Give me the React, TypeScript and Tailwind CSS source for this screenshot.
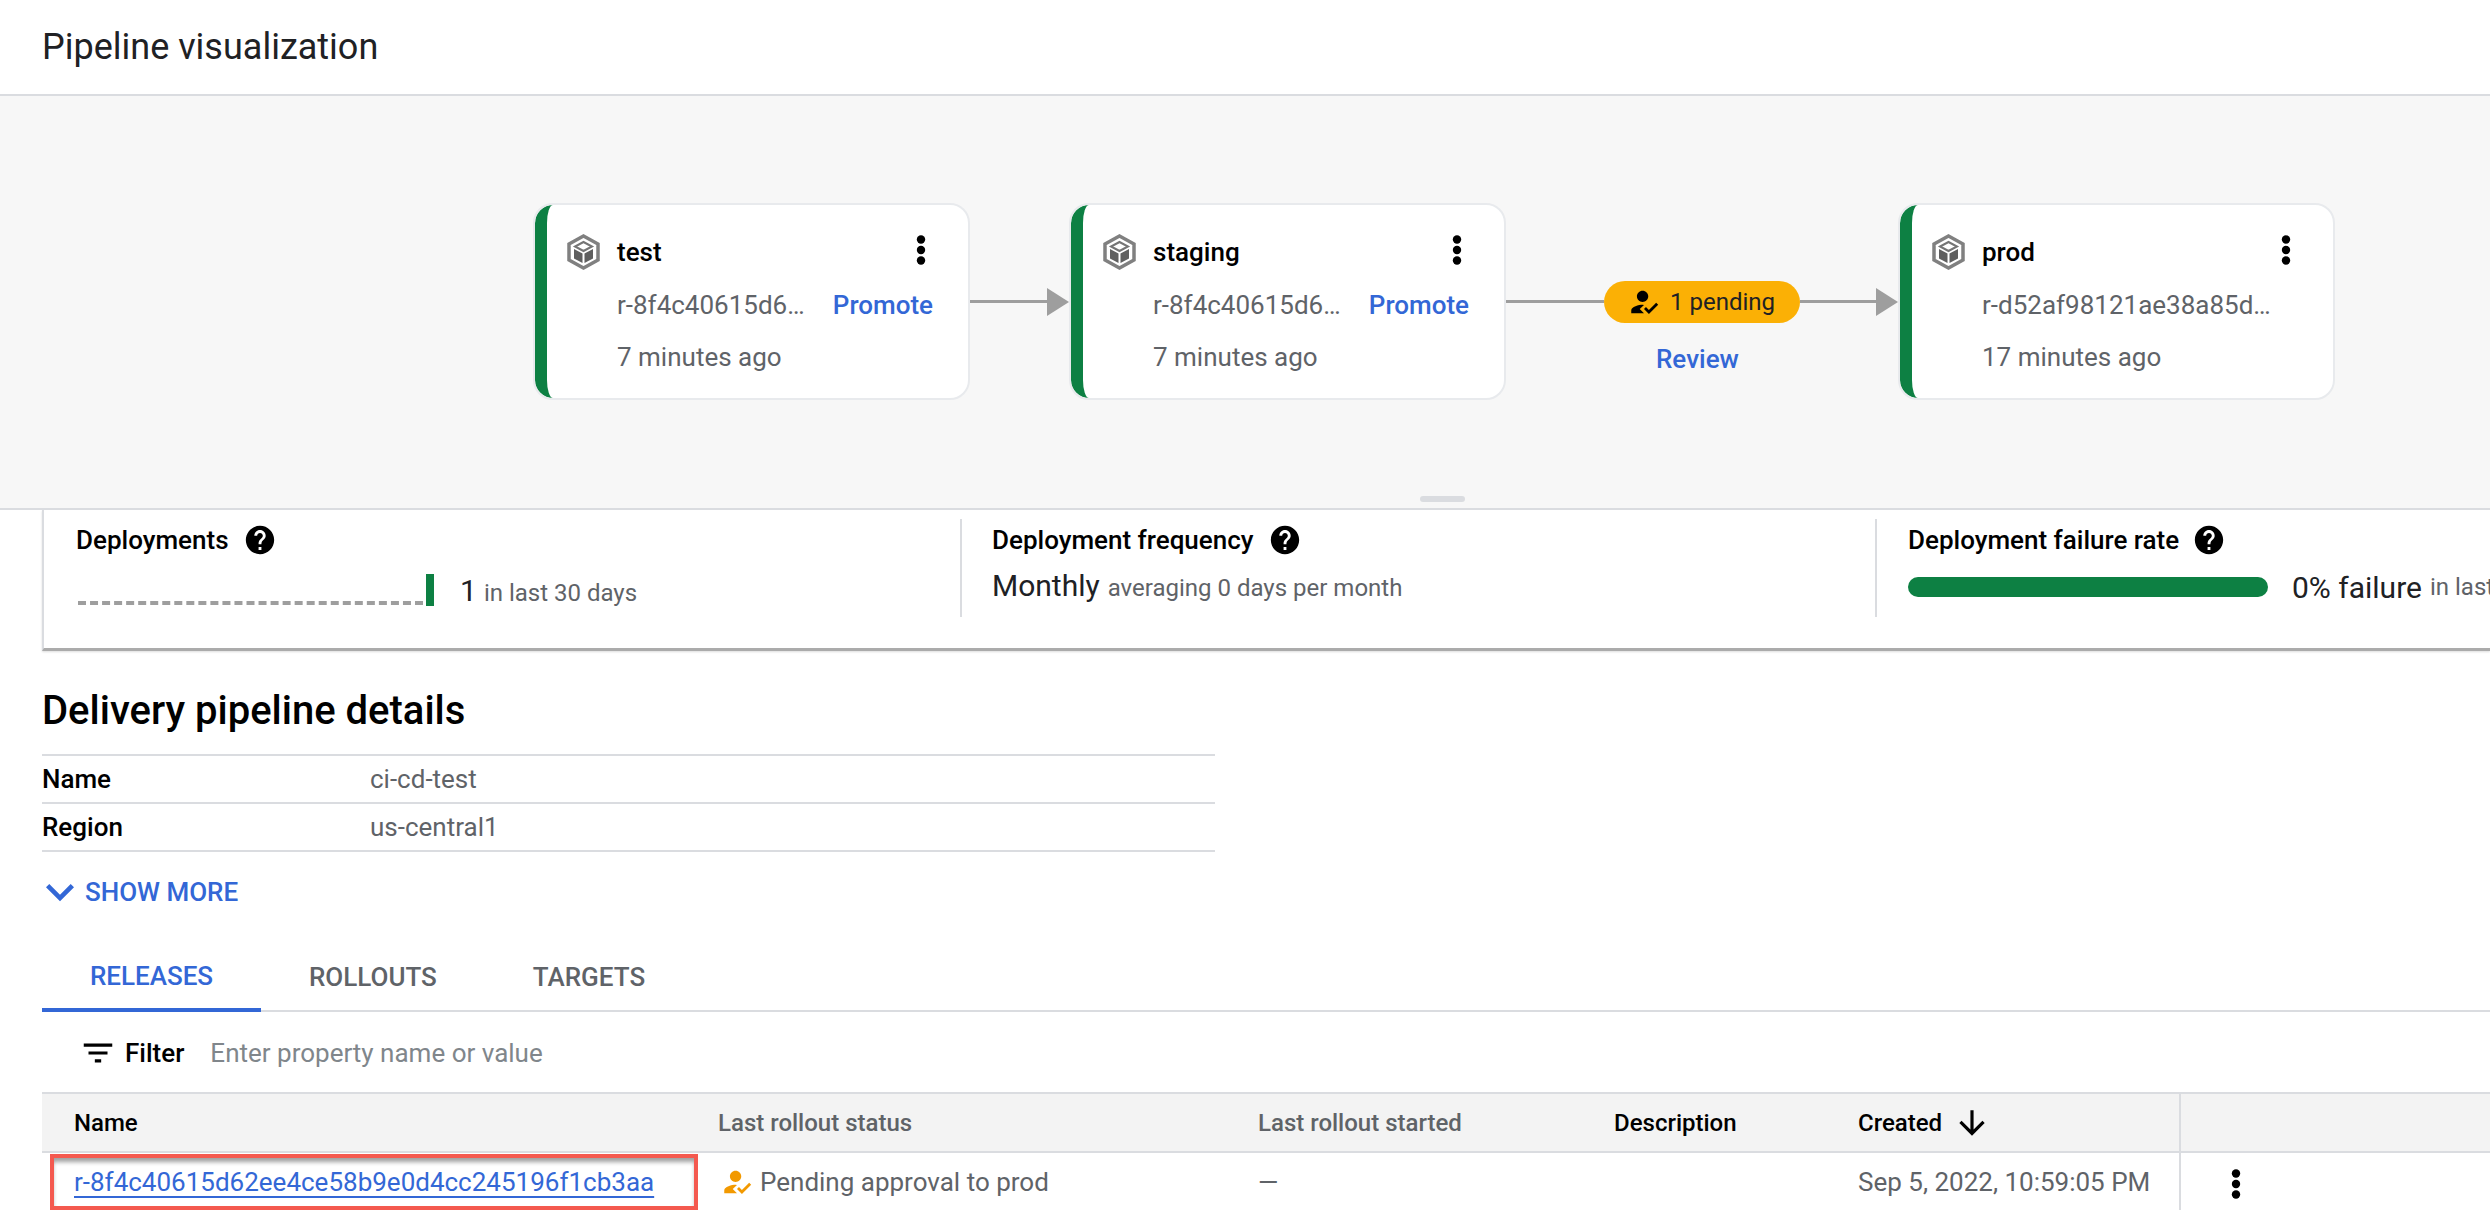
import { MdHelp, MdHowToReg, MdExpandMore, MdFilterList, MdArrowDownward } from "react-icons/md";

function CubeIcon() {
  return (
    <svg viewBox="0 0 33 36" className="w-[33px] h-[36px] shrink-0">
      <path d="M16.5 2 L31 10 V26 L16.5 34 L2 26 V10 Z" fill="none" stroke="#808080" strokeWidth="3.5" strokeLinejoin="miter" />
      <path d="M16.5 8 L25 12.5 L16.5 17 L8 12.5 Z" fill="none" stroke="#757575" strokeWidth="2" />
      <path d="M7 15 L15.5 19.5 V29 L7 24.5 Z" fill="#5f5f5f" />
      <path d="M26 15 L17.5 19.5 V29 L26 24.5 Z" fill="#5f5f5f" />
    </svg>
  );
}

function Kebab({ className }: { className?: string }) {
  return (
    <svg viewBox="0 0 10 30" className={"w-[10px] h-[30px] shrink-0 " + (className ?? "")}>
      <circle cx="5" cy="4.5" r="4.2" fill="#000" />
      <circle cx="5" cy="15" r="4.2" fill="#000" />
      <circle cx="5" cy="25.5" r="4.2" fill="#000" />
    </svg>
  );
}

function Connector({ width }: { width: string }) {
  return (
    <div className={"flex items-center h-[197px] shrink-0 " + width}>
      <div className="flex-1 h-[3px] bg-[#9e9e9e]" />
      <div className="w-0 h-0 border-y-[14px] border-y-transparent border-l-[22px] border-l-[#9e9e9e]" />
    </div>
  );
}

function TargetCard({ name, release, age, promote, width, releaseWidth }: { name: string; release: string; age: string; promote?: boolean; width: string; releaseWidth: string }) {
  return (
    <div className={"h-[197px] shrink-0 rounded-[20px] border-2 border-[#e8eaed] bg-white overflow-hidden " + width}>
      <div className="h-full border-l-[12px] border-l-[#0d8043] rounded-l-[18px] pl-[20px] pr-[35px] pt-[28px] flex flex-col">
        <div className="flex items-center h-[38px]">
          <CubeIcon />
          <span className="ml-[17px] text-[26px] font-medium text-black leading-none">{name}</span>
          <Kebab className="ml-auto mr-[7px] -mt-[5px]" />
        </div>
        <div className="flex items-center mt-[16px] h-[36px] pl-[50px]">
          <span className={"text-[26px] text-[#5f6368] truncate leading-none " + releaseWidth}>{release}</span>
          {promote && <span className="ml-auto text-[26px] font-medium text-[#3367d6] leading-none">Promote</span>}
        </div>
        <div className="mt-[16px] pl-[50px] text-[26px] text-[#5f6368] leading-[36px]">{age}</div>
      </div>
    </div>
  );
}

function Help() {
  return <MdHelp className="w-[34px] h-[34px] text-black shrink-0" />;
}

function DetailRow({ label, value }: { label: string; value: string }) {
  return (
    <div className="flex items-center h-[48px] border-b-2 border-[#dadce0]">
      <span className="w-[328px] text-[26px] font-medium text-black">{label}</span>
      <span className="text-[26px] text-[#5f6368]">{value}</span>
    </div>
  );
}

export default function App() {
  return (
    <div className="w-[2490px] h-[1210px] overflow-hidden bg-white [font-family:Roboto,sans-serif] whitespace-nowrap">
      <header className="h-[96px] flex items-center pl-[42px] border-b-2 border-[#dadce0]">
        <h1 className="text-[36px] text-[#202124]">Pipeline visualization</h1>
      </header>

      {/* Pipeline canvas */}
      <section className="relative h-[414px] bg-[#f7f7f7] border-b-2 border-[#dadce0] pl-[533px] pt-[107px] flex items-start">
        <TargetCard name="test" release="r-8f4c40615d62ee4ce58b9e0d" age="7 minutes ago" promote width="w-[437px]" releaseWidth="w-[188px]" />
        <Connector width="w-[99px]" />
        <TargetCard name="staging" release="r-8f4c40615d62ee4ce58b9e0d" age="7 minutes ago" promote width="w-[437px]" releaseWidth="w-[188px]" />
        <div className="w-[392px] h-[197px] shrink-0 relative">
          <div className="flex items-center h-[197px]">
            <div className="w-[98px] h-[3px] bg-[#9e9e9e]" />
            <div className="w-[196px] h-[42px] rounded-full bg-[#fbb005] flex items-center pl-[23px]">
              <MdHowToReg className="w-[34px] h-[34px] text-black" />
              <span className="ml-[9px] text-[24px] text-[#202124]">1 pending</span>
            </div>
            <div className="flex-1 h-[3px] bg-[#9e9e9e]" />
            <div className="w-0 h-0 border-y-[14px] border-y-transparent border-l-[22px] border-l-[#9e9e9e]" />
          </div>
          <span className="absolute left-[150px] top-[138px] text-[26px] font-medium text-[#3367d6] leading-[36px]">Review</span>
        </div>
        <TargetCard name="prod" release="r-d52af98121ae38a85d3c1fb2a7e4406b" age="17 minutes ago" width="w-[437px]" releaseWidth="w-[289px]" />
        <div className="absolute left-[1420px] top-[400px] w-[45px] h-[6px] rounded-full bg-[#dadce0]" />
      </section>

      {/* Metrics */}
      <section className="ml-[42px] h-[141px] border-l-2 border-[#dadce0] border-b-[3px] border-b-[#ababab] flex pt-[9px] overflow-hidden shadow-[0_1px_2px_#dddddd]">
        <div className="w-[918px] h-[98px] shrink-0 border-r-2 border-[#dadce0] pl-[32px]">
          <div className="flex items-center h-[40px] pt-[2px]">
            <span className="text-[26px] font-medium text-black">Deployments</span>
            <span className="ml-[14px]"><Help /></span>
          </div>
          <div className="flex items-end h-[46px] mt-[1px]">
            <div className="w-[345px] h-0 border-t-[4px] border-dashed border-[#9e9e9e] mb-[1px] ml-[2px]" />
            <div className="w-[8px] h-[32px] bg-[#0d8043] ml-[3px]" />
            <span className="ml-[26px] text-[30px] text-[#202124] leading-[36px] -mb-[3px]">1</span>
            <span className="ml-[7px] text-[24px] text-[#5f6368] leading-[32px] -mb-[3px]">in last 30 days</span>
          </div>
        </div>
        <div className="w-[915px] h-[98px] shrink-0 border-r-2 border-[#dadce0] pl-[30px]">
          <div className="flex items-center h-[40px] pt-[2px]">
            <span className="text-[26px] font-medium text-black">Deployment frequency</span>
            <span className="ml-[14px]"><Help /></span>
          </div>
          <div className="flex items-baseline h-[46px] mt-[4px]">
            <span className="text-[30px] text-[#202124]">Monthly</span>
            <span className="ml-[8px] text-[24px] text-[#5f6368]">averaging 0 days per month</span>
          </div>
        </div>
        <div className="flex-1 pl-[31px]">
          <div className="flex items-center h-[40px] pt-[2px]">
            <span className="text-[26px] font-medium text-black">Deployment failure rate</span>
            <span className="ml-[13px]"><Help /></span>
          </div>
          <div className="flex items-center h-[46px] mt-[5px]">
            <div className="w-[360px] h-[20px] rounded-full bg-[#0d8043] shrink-0" />
            <span className="ml-[24px] text-[30px] text-[#202124]">0% failure</span>
            <span className="ml-[8px] text-[24px] text-[#5f6368]">in last 30 days</span>
          </div>
        </div>
      </section>

      {/* Details */}
      <section className="pl-[42px] pt-[36px]">
        <h2 className="text-[40px] font-medium text-black leading-[48px]">Delivery pipeline details</h2>
        <div className="w-[1173px] mt-[19px] border-t-2 border-[#dadce0]">
          <DetailRow label="Name" value="ci-cd-test" />
          <DetailRow label="Region" value="us-central1" />
        </div>
        <div className="flex items-center h-[40px] mt-[20px] text-[#3367d6]">
          <MdExpandMore className="w-[56px] h-[56px] -ml-[10px] shrink-0" />
          <span className="-ml-[3px] text-[26px] font-medium">SHOW MORE</span>
        </div>
      </section>

      {/* Tabs */}
      <nav className="ml-[42px] mt-[35px] h-[65px] border-b-2 border-[#dadce0] flex text-[26px] font-medium text-[#5f6368]">
        <div className="w-[219px] h-[65px] shrink-0 flex items-center justify-center border-b-4 border-[#3367d6] text-[#3367d6] pb-[2px]">RELEASES</div>
        <div className="ml-[48px] flex items-center h-[61px]">ROLLOUTS</div>
        <div className="ml-[96px] flex items-center h-[61px]">TARGETS</div>
      </nav>

      {/* Filter */}
      <div className="ml-[42px] h-[80px] flex items-center pt-[2px]">
        <MdFilterList className="ml-[37px] w-[38px] h-[38px] text-black" />
        <span className="ml-[8px] text-[26px] font-medium text-black">Filter</span>
        <span className="ml-[26px] text-[26px] text-[#80868b]">Enter property name or value</span>
      </div>

      {/* Releases table */}
      <div className="ml-[42px] h-[61px] bg-[#f3f3f3] border-y-2 border-[#dadce0] flex items-center text-[24px] font-medium">
        <div className="w-[676px] pl-[32px] text-black">Name</div>
        <div className="w-[540px] text-[#5f6368]">Last rollout status</div>
        <div className="w-[356px] text-[#5f6368]">Last rollout started</div>
        <div className="w-[244px] text-black">Description</div>
        <div className="w-[323px] flex items-center text-black h-full border-r-2 border-[#dadce0]">
          Created
          <MdArrowDownward className="ml-[11px] w-[38px] h-[38px] text-black" />
        </div>
      </div>
      <div className="ml-[42px] h-[58px] flex items-center text-[26px] text-[#5f6368]">
        <div className="w-[676px] h-full pt-[1px] pl-[8px]">
          <div className="w-[648px] h-[56px] border-4 border-[#f4594f] shadow-[inset_0_5px_4px_-1px_#a0a0a0] flex items-center pl-[20px]">
            <a className="text-[#3367d6] underline underline-offset-[5px]">r-8f4c40615d62ee4ce58b9e0d4cc245196f1cb3aa</a>
          </div>
        </div>
        <div className="w-[540px] flex items-center">
          <MdHowToReg className="ml-[2px] w-[34px] h-[34px] text-[#f29900]" />
          <span className="ml-[6px]">Pending approval to prod</span>
        </div>
        <div className="w-[356px]">—</div>
        <div className="w-[244px]" />
        <div className="w-[323px] h-full flex items-center border-r-2 border-[#dadce0]">Sep 5, 2022, 10:59:05 PM</div>
        <Kebab className="ml-[50px] mt-[3px]" />
      </div>
    </div>
  );
}
